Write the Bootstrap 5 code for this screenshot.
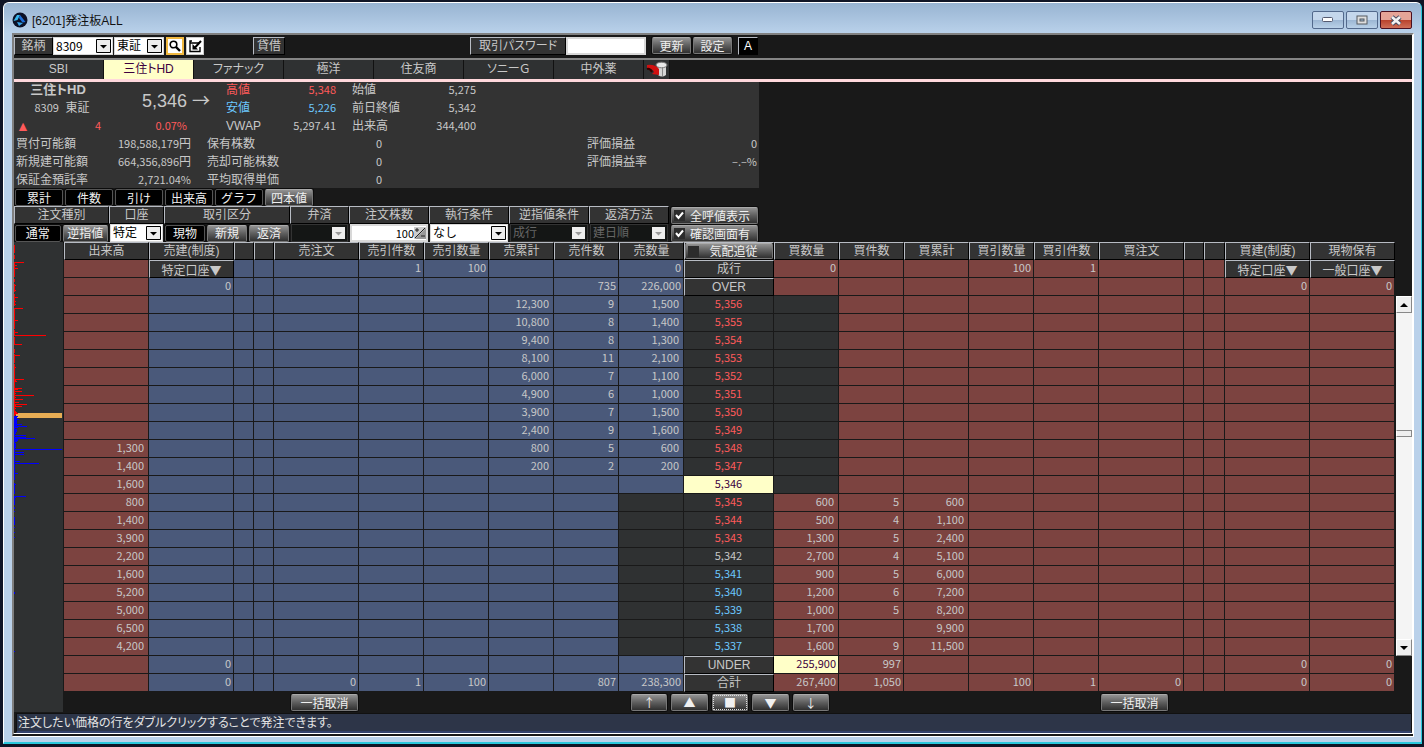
<!DOCTYPE html>
<html lang="ja">
<head>
<meta charset="utf-8">
<meta name="viewport" content="width=device-width, initial-scale=1">
<title>[6201]発注板ALL</title>
<link rel="stylesheet" href="https://cdn.jsdelivr.net/npm/bootstrap@5.3.0/dist/css/bootstrap.min.css">
<style>
:root{--ink:#c8c8c8;--gap:#191919;--panel:#333333;--dark:#2f3132;--blue:#4a597a;--red:#7c4340;--up:#ff5a5a;--down:#6cc8ff;--pick:#ffffc8;--edge:#b8bcc4}
body{background:#101526;color:var(--ink);font:12px/18px "Liberation Sans","Noto Sans CJK JP",sans-serif;font-feature-settings:"palt";padding:2px 2px 3px 3px;white-space:nowrap}
.win{border:1px solid #fff;border-right-color:#29c8dc;border-bottom:2px solid #29c8dc;border-radius:6px 6px 0 0;background:#bad1ea;padding:0 7px 5px 8px;overflow:hidden}
.win>header{height:30px;margin:0 -7px 0 -8px;padding:5px 9px 0 8px;background:linear-gradient(#98b4d2,#b9d1ea);color:#111}
.caps{gap:2px;padding-top:3px}
.capbtn{width:32px;height:18px;padding:0;border:1px solid #52698c;border-radius:2px;background:linear-gradient(#c4d7ec 50%,#9bb6d3 50%,#b9d1e8);display:flex;align-items:center;justify-content:center}
.capbtn.shut{border-color:#4a1020;background:linear-gradient(#e5a497 50%,#b8412b 50%,#cf6f58)}
.client{background:var(--gap);border:2px solid #808080;border-right-color:#fff;border-bottom:4px double #fff}
.num{font-family:"Noto Sans CJK JP",sans-serif;font-size:11px}
.bar{height:23px;padding:2px 0 0 0}
.plate{background:var(--panel);border:1px solid #000;border-top-color:var(--edge);border-left-color:var(--edge);height:18px;line-height:16px;text-align:center;color:var(--ink);padding:0;overflow:hidden}
.btn-m{height:17px;padding:0;border:1px solid #777;border-top-color:#aaa;border-radius:2px;background:linear-gradient(#929292,#5e5e5e 50%,#303030);color:#f0f0f0;font-family:"Noto Sans CJK JP",sans-serif;font-size:12px;line-height:14px;text-align:center;box-shadow:0 0 0 1px #0c0c0c}
.btn-m.on{background:#000;border-color:#555}
.sel{appearance:none;height:18px;border:1px solid #d8d8d8;border-radius:0;background:#fff url("data:image/svg+xml,%3Csvg xmlns='http://www.w3.org/2000/svg' width='15' height='14'%3E%3Cpath fill='%23eee' stroke='%23000' d='M.5.5h14v13H.5z'/%3E%3Cpath d='M4 6h7L7.5 9.500z'/%3E%3C/svg%3E") no-repeat right 1px center;color:#000;padding:0 16px 0 2px;font-size:12px;line-height:15px}
.sel:disabled{opacity:1;border-color:#333;color:#666;background:#141615 url("data:image/svg+xml,%3Csvg xmlns='http://www.w3.org/2000/svg' width='13' height='12'%3E%3Cpath fill='%23eee' d='M0 0h13v12H0z'/%3E%3Cpath fill='%23999' d='M3 5h7L6.500 8.500z'/%3E%3C/svg%3E") no-repeat right 2px center}
.sel.num{line-height:13px;padding-bottom:2px}
.fld{height:18px;border:2px solid #d8d8d8;border-radius:0;background:#fff;color:#000;padding:0}
.icn{width:18px;height:18px;padding:0;border:1px solid #ccc;background:#fff;display:flex;align-items:center;justify-content:center}
.icn.find{border:2px solid #f0b840}
.rule1{border-top:2px solid #858585}
.wl{border-bottom:3px solid #ffd8dc;height:24px}
.wl a{width:90px;height:19px;line-height:18px;background:var(--dark);border-right:1px solid #111;color:var(--ink);text-decoration:none;text-align:center}
.wl a.active{background:var(--pick);color:#3c0040}
.wl a.trash{width:26px}
.w30{width:32px}.w39{width:39px}.w50{width:50px}.w60{width:60px}.w80{width:80px}.w96{width:96px}
.quote{background:var(--panel);width:745px;height:106px;padding:0 2px;line-height:16px;overflow:hidden}
.quote .num{line-height:14px}
.blk>div{display:flex;justify-content:space-between;height:18px}
.up{color:var(--up)}.down{color:var(--down)}
.last{font-size:18px;line-height:34px}
.arrow{font-family:"Noto Sans CJK JP",sans-serif}
.modes{height:18px;gap:2px;padding:1px 1px 0}
.modes button{width:48px}
.ord>div>.ctl{height:18px;display:flex;align-items:center;gap:2px;padding:0 1px}
.ord>div>.ctl .btn-m{flex:1}
.ord>div>.ctl .sel,.ord>div>.ctl .fld{width:100%}
.opts{gap:1px;padding:1px 0 0 2px}
.chk{width:87px;display:flex;align-items:center;color:#f0f0f0}
.tick{appearance:none;width:11px;height:11px;margin:0 5px 0 2px;background:#2c2c2c;flex:none}
.tick:checked{background:#2c2c2c url("data:image/svg+xml,%3Csvg xmlns='http://www.w3.org/2000/svg' width='11' height='11'%3E%3Cpath fill='none' stroke='%23fff' stroke-width='2' d='M2 5l2.500 3L9 2.500'/%3E%3C/svg%3E")}
.hist{width:49px;background:var(--dark);margin-right:1px;flex:none}
.ladder{table-layout:fixed;width:100%;border-collapse:separate;border-spacing:0;line-height:15px}
.ladder th,.ladder td{height:18px;padding:0 4px 2px 0;border:0 solid var(--gap);border-width:0 1px 1px 0;text-align:right;font-weight:400;overflow:hidden}
.ladder .hd{background:var(--panel);border-width:1px;border-color:var(--edge) #000 #000 var(--edge);padding:0;text-align:center;line-height:16px;font-family:"Liberation Sans","Noto Sans CJK JP",sans-serif;font-size:12px}
.ladder .s{background:var(--blue)}.ladder .b{background:var(--red)}.ladder .k{background:var(--dark)}
.ladder .pr{text-align:center;padding-right:0}
.ladder .hot{background:var(--pick);color:#3c0040}
.ladder .sum td{padding-right:2px}
.ladder .sum .hd{padding:0}
.ladder .chk{height:16px;width:100%}
.ladder .sub{display:block;height:16px;background:none;border:0;color:inherit;padding:0;line-height:15px;width:100%;font-family:"Noto Sans CJK JP",sans-serif}
.sb{width:16px;margin:54px 0 36px 1px;background:#f4f4f4;flex:none}
.sb button{height:17px;padding:0;border:1px solid #888;border-top-color:#fff;border-left-color:#fff;background:#eee;display:flex;align-items:center;justify-content:center}
.thumb{height:7px;border:1px solid #888;border-left-color:#fff;background:#eee;margin:auto 0 202px}
.foot{height:21px;display:grid;grid-template-columns:226fr 85fr 255fr 200fr 270fr 85fr 227fr;padding-top:2px}
.foot .nv{display:grid;grid-template-columns:repeat(5,1fr);gap:2px;grid-column:4}
.foot .btn-m{margin:0 1px}
.foot .all1{grid-column:2;width:67px}.foot .all2{grid-column:6;width:67px}
.foot .focus{outline:1px dotted #ddd;outline-offset:-2px}
.status{background:#2d3548;border:1px solid #111;border-bottom:2px solid #33426b;height:20px;color:#e4e4e4;margin-left:2px;padding-left:1px;line-height:16px;font-family:"Noto Sans CJK JP",sans-serif}
</style>
</head>
<body>
<div class="win">
 <header class="d-flex align-items-start">
  <svg class="mt-1 me-1" width="16" height="16" viewBox="0 0 16 16"><circle cx="8" cy="8" r="7.500" fill="#0b1026"/><path d="M1.500 9L5 3h3L5.500 8z" fill="#38b6ea"/><path d="M8 3l5.500 7-3 .5L7 6z" fill="#1f6fd8"/><path d="M5 10l6 1-4 3z" fill="#38a6ea"/></svg>
  <span class="mt-1">[6201]発注板ALL</span>
  <div class="caps ms-auto d-flex">
   <button class="capbtn" aria-label="最小化"><svg width="12" height="6"><rect x=".5" y=".5" width="10" height="4" rx="1" fill="#fff" stroke="#555b70"/></svg></button>
   <button class="capbtn" aria-label="最大化"><svg width="12" height="10"><rect x="1" y="1" width="10" height="8" fill="#ddd" stroke="#555b60"/><rect x="4" y="4" width="4" height="2" fill="#9bb6d3" stroke="#555b60"/></svg></button>
   <button class="capbtn shut" aria-label="閉じる"><svg width="14" height="11"><path d="M3 2l8 7M11 2L3 9" stroke="#444a60" stroke-width="4.500"/><path d="M3 2l8 7M11 2L3 9" stroke="#f2f2f2" stroke-width="2.600"/></svg></button>
  </div>
 </header>
 <main class="client">
  <div class="bar d-flex align-items-start">
   <label class="plate w39" for="code">銘柄</label>
   <select id="code" class="sel num w60"><option>8309</option></select>
   <select class="sel w50" style="margin-left:1px" aria-label="市場"><option>東証</option></select>
   <button class="icn find" style="margin-left:2px" aria-label="検索"><svg width="12" height="12"><circle cx="4.500" cy="4.500" r="3.300" fill="none" stroke="#000" stroke-width="1.600"/><path d="M7 7l4 4" stroke="#000" stroke-width="2.400"/></svg></button>
   <button class="icn" style="margin-left:2px" aria-label="編集"><svg width="14" height="14"><path d="M4 2H2v10.500h10V8M2 2v2h9" stroke="#000" stroke-width="1.400" fill="none"/><path d="M13 2L7 8.500" stroke="#000" stroke-width="2"/><path d="M4.500 5v5.500h5.500z"/></svg></button>
   <span class="plate w30" style="margin-left:49px">貸借</span>
   <label class="plate w96" for="pw" style="margin-left:185px">取引パスワード</label>
   <input id="pw" type="password" class="fld w80">
   <button class="btn-m w39" style="margin-left:6px">更新</button>
   <button class="btn-m w39" style="margin-left:2px">設定</button>
   <button class="plate bg-black text-white" style="width:20px;margin-left:6px">A</button>
  </div>
  <nav class="wl rule1 d-flex">
   <a href="#">SBI</a><a href="#" class="active">三住トHD</a><a href="#">ファナック</a><a href="#">極洋</a><a href="#">住友商</a><a href="#">ソニーＧ</a><a href="#">中外薬</a>
   <a href="#" class="trash" aria-label="削除"><svg width="22" height="17" viewBox="0 0 22 17"><path d="M11 5h9v9q-4 3-8 0z" fill="#d5d5d5"/><path d="M16 5h1v10h-1z" fill="#888"/><ellipse cx="15.500" cy="4" rx="5.500" ry="2.800" fill="#e8e8e8" stroke="#777"/><path d="M1 4q8-1 12 4v6l-7-1 2-2Q6 7 1 8z" fill="#d01010"/><path d="M1 8q3-1 5 3" stroke="#300" fill="none" stroke-width="2"/></svg></a>
  </nav>
  <section class="quote">
   <div class="d-flex">
    <div style="width:210px">
     <div class="d-flex">
      <div class="text-center" style="width:92px"><div class="fw-bold pe-2" style="font-size:13px;height:18px">三住トHD</div><div style="height:18px"><span class="num">8309</span>&nbsp; 東証</div></div>
      <div class="last ms-auto me-3">5,346 <span class="arrow">→</span></div>
     </div>
     <div class="d-flex up"><span style="width:38px;font-size:14px">▲</span><span class="num text-end" style="width:47px">4</span><span class="num text-end" style="width:86px">0.07%</span></div>
    </div>
    <div class="blk" style="width:110px">
     <div class="up"><span>高値</span><span class="num">5,348</span></div><div class="down"><span>安値</span><span class="num">5,226</span></div><div><span>VWAP</span><span class="num">5,297.41</span></div>
    </div>
    <div class="blk" style="width:124px;margin-left:16px">
     <div><span>始値</span><span class="num">5,275</span></div><div><span>前日終値</span><span class="num">5,342</span></div><div><span>出来高</span><span class="num">344,400</span></div>
    </div>
   </div>
   <div class="d-flex">
    <div class="blk" style="width:175px"><div><span>買付可能額</span><span><span class="num">198,588,179</span>円</span></div><div><span>新規建可能額</span><span><span class="num">664,356,896</span>円</span></div><div><span>保証金預託率</span><span class="num">2,721.04%</span></div></div>
    <div class="blk" style="width:175px;margin-left:16px"><div><span>保有株数</span><span class="num">0</span></div><div><span>売却可能株数</span><span class="num">0</span></div><div><span>平均取得単価</span><span class="num">0</span></div></div>
    <div class="blk ms-auto" style="width:170px"><div><span>評価損益</span><span class="num">0</span></div><div><span>評価損益率</span><span class="num">–.–%</span></div></div>
   </div>
  </section>
  <div class="modes d-flex">
   <button class="btn-m on">累計</button><button class="btn-m on">件数</button><button class="btn-m on">引け</button><button class="btn-m on">出来高</button><button class="btn-m on">グラフ</button><button class="btn-m">四本値</button>
  </div>
  <form class="ord d-flex">
   <div style="width:95px"><div class="plate">注文種別</div><div class="ctl"><button type="button" class="btn-m on">通常</button><button type="button" class="btn-m">逆指値</button></div></div>
   <div style="width:55px"><div class="plate">口座</div><div class="ctl"><select class="sel" aria-label="口座"><option>特定</option></select></div></div>
   <div style="width:126px"><div class="plate">取引区分</div><div class="ctl"><button type="button" class="btn-m on">現物</button><button type="button" class="btn-m">新規</button><button type="button" class="btn-m">返済</button></div></div>
   <div style="width:59px"><div class="plate">弁済</div><div class="ctl"><select class="sel" disabled aria-label="弁済"><option></option></select></div></div>
   <div class="w80"><label class="plate d-block" for="qty">注文株数</label><div class="ctl position-relative"><input id="qty" class="fld num text-end" value="100" style="padding-right:12px"><svg class="position-absolute" style="right:3px" width="12" height="12"><path d="M0 0h12v12H0z" fill="#ccc"/><path d="M12 1v11H1z" fill="#999"/><path d="M1 11L11 1M1 3h4M3 1v4M7 9h4" stroke="#222"/></svg></div></div>
   <div class="w80"><div class="plate">執行条件</div><div class="ctl"><select class="sel" aria-label="執行条件"><option>なし</option></select></div></div>
   <div class="w80"><div class="plate">逆指値条件</div><div class="ctl"><select class="sel" disabled aria-label="逆指値条件"><option>成行</option></select></div></div>
   <div class="w80"><div class="plate">返済方法</div><div class="ctl"><select class="sel" disabled aria-label="返済方法"><option>建日順</option></select></div></div>
   <div class="opts d-flex flex-column"><label class="btn-m chk"><input type="checkbox" class="tick" checked>全呼値表示</label><label class="btn-m chk"><input type="checkbox" class="tick" checked>確認画面有</label></div>
  </form>
  <div class="d-flex">
   <svg class="hist" id="hist" height="470" shape-rendering="crispEdges"></svg>
   <div class="flex-grow-1">
    <div class="d-flex">
     <table class="ladder flex-grow-1" id="ladder"><colgroup id="cols"></colgroup><thead></thead><tbody class="num"></tbody></table>
     <div class="sb d-flex flex-column">
      <button aria-label="上へ"><svg width="8" height="4"><path d="M0 4h8L4 0z"/></svg></button>
      <div class="thumb"></div>
      <button aria-label="下へ"><svg width="8" height="4"><path d="M0 0h8L4 4z"/></svg></button>
     </div>
    </div>
    <div class="foot">
     <button class="btn-m all1">一括取消</button>
     <div class="nv"><button class="btn-m">↑</button><button class="btn-m">▲</button><button class="btn-m focus">■</button><button class="btn-m">▼</button><button class="btn-m">↓</button></div>
     <button class="btn-m all2">一括取消</button>
    </div>
   </div>
  </div>
  <div class="status">注文したい価格の行をダブルクリックすることで発注できます。</div>
 </main>
</div>
<script src="https://cdn.jsdelivr.net/npm/bootstrap@5.3.0/dist/js/bootstrap.bundle.min.js"></script>
<script>
const widths=[85,85,20,20,85,65,65,65,65,65,90,65,65,65,65,65,85,20,21,85,85];
document.getElementById('cols').innerHTML=widths.map(w=>`<col style="width:${w}px">`).join('');
const heads=['出来高','売建(制度)','','','売注文','売引件数','売引数量','売累計','売件数','売数量','','買数量','買件数','買累計','買引数量','買引件数','買注文','','','買建(制度)','現物保有'];
document.querySelector('#ladder thead').innerHTML='<tr>'+heads.map((h,i)=>i===10
 ?'<th class="hd"><label class="btn-m chk"><input type="checkbox" class="tick">&nbsp; 気配追従</label></th>'
 :`<th class="hd">${h}</th>`).join('')+'</tr>';
const side=i=>i===0||i>10?'b':i===10?'k':'s';
const row=(vals,cls={},tr='')=>`<tr class="${tr}">`+widths.map((_,i)=>`<td class="${cls[i]||side(i)}">${vals[i]??''}</td>`).join('')+'</tr>';
const acct=t=>`<button class="sub">${t}▼</button>`;
let html=row({1:acct('特定口座'),5:1,6:100,9:0,10:'成行',11:0,14:100,15:1,19:acct('特定口座'),20:acct('一般口座')},{1:'hd',10:'hd',19:'hd',20:'hd'},'sum');
html+=row({1:0,8:735,9:'226,000',10:'OVER',19:0,20:0},{10:'hd'},'sum');
// [出来高, 累計, 件数, 数量] for each price, from 5,356 down
const book=[['','12,300',9,'1,500'],['','10,800',8,'1,400'],['','9,400',8,'1,300'],['','8,100',11,'2,100'],['','6,000',7,'1,100'],['','4,900',6,'1,000'],['','3,900',7,'1,500'],['','2,400',9,'1,600'],['1,300','800',5,'600'],['1,400','200',2,'200'],['1,600'],
['800','600',5,'600'],['1,400','1,100',4,'500'],['3,900','2,400',5,'1,300'],['2,200','5,100',4,'2,700'],['1,600','6,000',5,'900'],['5,200','7,200',6,'1,200'],['5,000','8,200',5,'1,000'],['6,500','9,900','','1,700'],['4,200','11,500',9,'1,600']];
book.forEach(([v,c,n,q],k)=>{
 const p=5356-k,price='5,'+(p-5000);
 const tone=p===5346?'hot':p>5342?'k up':p<5342?'k down':'k';
 html+=k<11?row({0:v,7:c,8:n,9:q,10:price},{10:tone+' pr',11:'k'}):row({0:v,10:price,11:q,12:n,13:c},{9:'k',10:tone+' pr'});
});
html+=row({1:0,10:'UNDER',11:'255,900',12:'997',19:0,20:0},{10:'hd',11:'hot'},'sum');
html+=row({1:0,4:0,5:1,6:100,8:807,9:'238,300',10:'合計',11:'267,400',12:'1,050',14:100,15:1,16:0,19:0,20:0},{10:'hd'},'sum');
document.querySelector('#ladder tbody').innerHTML=html;
// volume profile: [y, length, height]
const red=[[3,1,8],[13,1,4],[20,10],[21,1,14],[23,3],[26,4],[37,1,3],[42,1,8],[43,2],[48,2],[52,1,12],[55,4],[59,2],[62,2],[66,9],[67,1,17],[78,4],[83,1,4],[88,1,6],[90,4],[93,32],[95,1,7],[102,8],[107,1,4],[112,1,9],[113,6],[122,1,9],[125,2],[131,1,43],[137,10],[138,2],[139,3],[146,8],[147,4],[149,8],[151,2],[153,20],[155,2],[157,9],[160,5],[162,13],[163,2],[164,8],[166,2],[169,2,4],[170,3,2],[171,4]];
const blue=[[174,1,58],[174,4],[175,3,2],[177,5],[178,3,4],[182,8],[183,3],[184,13],[185,4],[187,3,3],[189,2,3],[193,12],[195,12],[196,21],[197,4,2],[199,3],[201,2,5],[207,48],[210,10],[212,10],[219,6],[221,25],[230,1,7],[231,4],[236,1,2],[241,1,6],[242,2],[247,1,5],[254,12],[255,2],[256,1,7],[265,1,2],[269,1],[275,1,8],[285,1],[290,1],[295,1],[350,1,2],[409,1]];
const bars=(a,c)=>a.map(([y,w,h=1])=>`<rect x="0" y="${y}" width="${w}" height="${h}" fill="${c}"/>`).join('');
document.getElementById('hist').innerHTML='<rect x="2" y="171" width="46" height="5" fill="#e8ad54"/>'+bars(red,'#f00')+bars(blue,'#00f');
</script>
</body>
</html>
